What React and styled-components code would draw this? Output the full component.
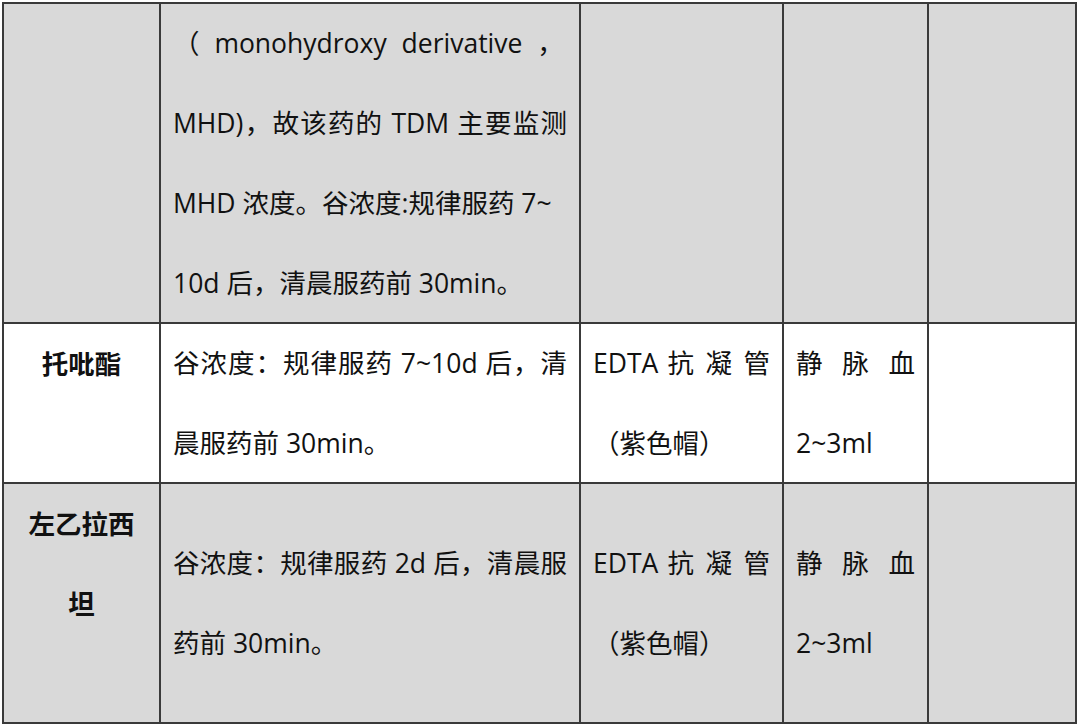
import styled, { createGlobalStyle } from "styled-components"

const GlobalStyle = createGlobalStyle`
  html, body {
    margin: 0;
    padding: 0;
    background: #ffffff;
  }
  body {
    font-family: "Open Sans", "Noto Sans CJK SC", sans-serif;
    color: #111111;
  }
`

const Page = styled.div`
  padding: 2px 0 0 2px;
`

const Grid = styled.div`
  display: grid;
  grid-template-columns: 157px 420px 203px 145px 148px;
  grid-template-rows: 320px 160px 240px;
  width: max-content;
  border-top: 2px solid #3a3a3a;
  border-left: 2px solid #3a3a3a;
`

const Cell = styled.div`
  box-sizing: border-box;
  border-right: 2px solid #3a3a3a;
  border-bottom: 2px solid #3a3a3a;
  background: ${(p) => (p.$shade ? "#d9d9d9" : "#ffffff")};
  padding: 0 12px;
  display: flex;
  flex-direction: column;
  justify-content: ${(p) => (p.$top ? "flex-start" : "center")};
  overflow: hidden;
`

const Line = styled.div`
  font-size: 26.5px;
  line-height: 80px;
  height: 80px;
  white-space: ${(p) => (p.$spread ? "normal" : "nowrap")};
  font-weight: ${(p) => (p.$bold ? 700 : 400)};
  word-spacing: ${(p) => p.$gap || 0}px;
  text-align: ${(p) => (p.$center ? "center" : "justify")};
  text-align-last: ${(p) => (p.$center ? "center" : p.$spread ? "justify" : "left")};
`

const Name = ({ lines, shade }) => (
  <Cell $shade={shade} $top>
    {lines.map((l, i) => (
      <Line key={i} $bold $center>
        {l}
      </Line>
    ))}
  </Cell>
)

const Text = ({ lines, shade }) => (
  <Cell $shade={shade}>
    {lines.map((l, i) => (
      <Line key={i} $spread={l.spread} $gap={l.gap}>
        {l.t}
      </Line>
    ))}
  </Cell>
)

const rows = [
  {
    shade: true,
    name: [],
    desc: [
      { t: "（ monohydroxy derivative ，", gap: 8 },
      { t: "MHD)，故该药的 TDM 主要监测", spread: true },
      { t: "MHD 浓度。谷浓度:规律服药 7~" },
      { t: "10d 后，清晨服药前 30min。" },
    ],
    tube: [],
    sample: [],
  },
  {
    shade: false,
    name: ["托吡酯"],
    desc: [
      { t: "谷浓度：规律服药 7~10d 后，清", spread: true },
      { t: "晨服药前 30min。" },
    ],
    tube: [{ t: "EDTA 抗 凝 管", spread: true }, { t: "（紫色帽）" }],
    sample: [{ t: "静 脉 血", spread: true }, { t: "2~3ml" }],
  },
  {
    shade: true,
    name: ["左乙拉西", "坦"],
    desc: [
      { t: "谷浓度：规律服药 2d 后，清晨服", spread: true },
      { t: "药前 30min。" },
    ],
    tube: [{ t: "EDTA 抗 凝 管", spread: true }, { t: "（紫色帽）" }],
    sample: [{ t: "静 脉 血", spread: true }, { t: "2~3ml" }],
  },
]

export default function App() {
  return (
    <>
      <GlobalStyle />
      <Page>
        <Grid>
          {rows.map((r, i) => [
            <Name key={`n${i}`} lines={r.name} shade={r.shade} />,
            <Text key={`d${i}`} lines={r.desc} shade={r.shade} />,
            <Text key={`t${i}`} lines={r.tube} shade={r.shade} />,
            <Text key={`s${i}`} lines={r.sample} shade={r.shade} />,
            <Cell key={`e${i}`} $shade={r.shade} />,
          ])}
        </Grid>
      </Page>
    </>
  )
}
